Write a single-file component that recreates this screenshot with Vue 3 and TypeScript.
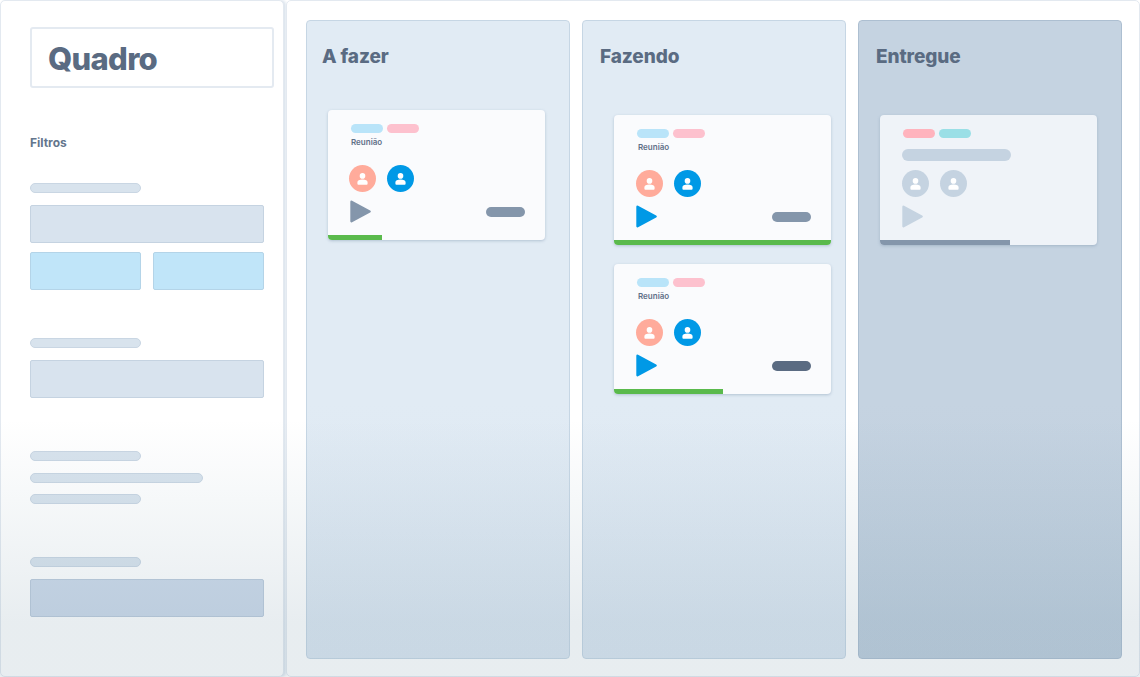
<script setup lang="ts">
type Card = {
  tags: string[];
  label?: string;
  avatars: string[];
  play: string;
  pill?: string;
  progress: number;
  progressColor: string;
};

type Column = {
  id: string;
  title: string;
  cards: Card[];
};

const green = '#5aba4c';

const columns: Column[] = [
  {
    id: 'todo',
    title: 'A fazer',
    cards: [
      {
        tags: ['#b9e4f9', '#fdc1ce'],
        label: 'Reunião',
        avatars: ['#ffab9b', '#0099e6'],
        play: '#8496ab',
        pill: '#8496ab',
        progress: 25,
        progressColor: green,
      },
    ],
  },
  {
    id: 'doing',
    title: 'Fazendo',
    cards: [
      {
        tags: ['#b9e4f9', '#fdc1ce'],
        label: 'Reunião',
        avatars: ['#ffab9b', '#0099e6'],
        play: '#0099e6',
        pill: '#8496ab',
        progress: 100,
        progressColor: green,
      },
      {
        tags: ['#b9e4f9', '#fdc1ce'],
        label: 'Reunião',
        avatars: ['#ffab9b', '#0099e6'],
        play: '#0099e6',
        pill: '#5a6b82',
        progress: 50,
        progressColor: green,
      },
    ],
  },
  {
    id: 'done',
    title: 'Entregue',
    cards: [
      {
        tags: ['#ffb3bd', '#9adfe6'],
        avatars: ['#c5d3e1', '#c5d3e1'],
        play: '#c5d3e1',
        progress: 60,
        progressColor: '#8496ab',
      },
    ],
  },
];
</script>

<template>
  <div class="page">
    <aside class="sidebar">
      <div class="title-box"><h1>Quadro</h1></div>
      <h2 class="filters">Filtros</h2>

      <section class="group group-first">
        <div class="bar" />
        <div class="field" />
        <div class="field-row">
          <div class="field field-blue" />
          <div class="field field-blue" />
        </div>
      </section>

      <section class="group group-second">
        <div class="bar" />
        <div class="field" />
      </section>

      <section class="group group-third">
        <div class="bar" />
        <div class="bar bar-long" />
        <div class="bar" />
      </section>

      <section class="group group-fourth">
        <div class="bar" />
        <div class="field field-dark" />
      </section>
    </aside>

    <main class="board">
      <section
        v-for="column in columns"
        :key="column.id"
        class="column"
        :class="`column-${column.id}`"
      >
        <h3>{{ column.title }}</h3>
        <div class="cards">
          <article v-for="(card, i) in column.cards" :key="i" class="card">
            <div class="card-body">
              <div class="tags">
                <span
                  v-for="tag in card.tags"
                  :key="tag"
                  class="tag"
                  :style="{ background: tag }"
                />
              </div>
              <p v-if="card.label" class="label">{{ card.label }}</p>
              <div v-else class="label-bar" />
              <div class="avatars">
                <span
                  v-for="(avatar, a) in card.avatars"
                  :key="a"
                  class="avatar"
                  :style="{ background: avatar }"
                >
                  <svg width="11" height="12" viewBox="0 0 11 12" fill="#fff">
                    <circle cx="5.5" cy="2.9" r="2.8" />
                    <path d="M.4 9.2C.4 7.4 2.4 6.6 5.5 6.6s5.1.8 5.1 2.6v1.6a1 1 0 0 1-1 1H1.4a1 1 0 0 1-1-1z" />
                  </svg>
                </span>
              </div>
              <div class="card-foot">
                <svg class="play" width="21" height="23" viewBox="0 0 21 23">
                  <path
                    d="M1.5 1.8 19.6 11.5 1.5 21.2Z"
                    :fill="card.play"
                    :stroke="card.play"
                    stroke-width="2.4"
                    stroke-linejoin="round"
                  />
                </svg>
                <span v-if="card.pill" class="pill" :style="{ background: card.pill }" />
              </div>
            </div>
            <div class="progress" :style="{ width: `${card.progress}%`, background: card.progressColor }" />
          </article>
        </div>
      </section>
    </main>

    <div class="fade" />
  </div>
</template>

<style scoped>
.page {
  position: relative;
  display: flex;
  width: 1140px;
  height: 677px;
  overflow: hidden;
  background: #fff;
  font-family: Inter, "Liberation Sans", sans-serif;
  color: #5a6b82;
}
.sidebar {
  box-sizing: border-box;
  width: 284px;
  height: 677px;
  flex: none;
  padding: 26px 20px 0 30px;
  background: #fff;
  border: 1px solid #e3e9f0;
  border-radius: 5px;
  box-shadow: 2px 0 3px rgba(150, 175, 200, 0.35);
}
.title-box {
  box-sizing: border-box;
  width: 244px;
  height: 61px;
  margin-left: -1px;
  padding-left: 16px;
  border: 2px solid #e4eaf1;
  border-radius: 3px;
  display: flex;
  align-items: center;
}
h1 {
  margin: 0;
  font-size: 31px;
  line-height: 1;
  font-weight: 800;
  letter-spacing: -0.7px;
  padding-top: 1px;
}
.filters {
  margin: 47px 0 0 -1px;
  font-size: 12px;
  line-height: 15px;
  font-weight: 700;
  color: #64768d;
}
.group {
  display: flex;
  flex-direction: column;
  margin-left: -1px;
}
.group-first {
  margin-top: 33px;
}
.group-second {
  margin-top: 48px;
}
.group-third {
  margin-top: 53px;
  gap: 11.5px;
}
.group-fourth {
  margin-top: 53px;
}
.bar {
  box-sizing: border-box;
  width: 111px;
  height: 10px;
  border-radius: 5px;
  background: #d8e3ed;
  border: 1px solid #c9d6e3;
}
.bar-long {
  width: 173px;
}
.field {
  box-sizing: border-box;
  flex: none;
  width: 234px;
  height: 38px;
  margin-top: 12px;
  border-radius: 2px;
  background: #d8e3ee;
  border: 1px solid #c5d3e1;
}
.field-row {
  display: flex;
  gap: 12px;
  margin-top: 9px;
}
.field-row .field {
  width: 111px;
  margin-top: 0;
}
.field-blue {
  background: #c0e5f9;
  border-color: #b4d4e8;
}
.field-dark {
  background: #cddaea;
  border-color: #bccbdc;
}
.board {
  flex: 1;
  display: flex;
  gap: 12px;
  margin-left: 2px;
  padding: 19px 17px 17px 19px;
  border: 1px solid #e3e9f0;
  border-radius: 5px;
  box-sizing: border-box;
  background: #fff;
}
.column {
  box-sizing: border-box;
  width: 264px;
  padding-top: 24px;
  border: 1px solid #c6d6e4;
  border-radius: 4px;
  background: linear-gradient(#e1ebf4 60%, #dbe6f1 100%);
}
.column-done {
  background: linear-gradient(#c5d3e1 60%, #bdcddc 100%);
  border-color: #adbfd1;
}
h3 {
  margin: 0;
  font-size: 19px;
  line-height: 24px;
  font-weight: 800;
  letter-spacing: -0.1px;
  padding-left: 17px;
}
.column-todo h3 {
  padding-left: 15px;
}
.cards {
  display: flex;
  flex-direction: column;
  gap: 19px;
  margin-top: 46px;
  padding-left: 31px;
}
.column-todo .cards {
  margin-top: 41px;
  padding-left: 21px;
}
.column-done .cards {
  padding-left: 21px;
}
.card {
  box-sizing: border-box;
  width: 217px;
  height: 130px;
  display: flex;
  flex-direction: column;
  overflow: hidden;
  border-radius: 4px;
  background: #fafbfd;
  box-shadow: 0 1px 3px rgba(120, 145, 170, 0.45);
}
.column-done .card {
  background: #eff3f8;
}
.card-body {
  flex: 1;
  padding: 14px 20px 0 22px;
}
.column-todo .card-body {
  padding-left: 21px;
}
.tags {
  display: flex;
  gap: 4px;
  padding-left: 1px;
}
.column-todo .tags {
  padding-left: 2px;
}
.tag {
  width: 32px;
  height: 9px;
  border-radius: 5px;
}
.label {
  margin: 4px 0 0 2px;
  font-size: 8px;
  line-height: 10px;
  font-weight: 600;
  color: #5f7088;
  height: 18px;
}
.label-bar {
  width: 109px;
  height: 12px;
  margin-top: 11px;
  margin-bottom: -1px;
  border-radius: 6px;
  background: #c5d3e1;
}
.avatars {
  display: flex;
  gap: 11px;
  margin-top: 10px;
  margin-left: -0.5px;
}
.column-todo .avatars {
  margin-left: 0;
}
.avatar {
  width: 27px;
  height: 27px;
  border-radius: 50%;
  display: flex;
  align-items: center;
  justify-content: center;
}
.card-foot {
  display: flex;
  align-items: center;
  justify-content: space-between;
  margin-top: 8px;
}
.column-todo .card-foot {
  padding-left: 1px;
}
.play {
  display: block;
}
.pill {
  width: 39px;
  height: 10px;
  border-radius: 5px;
}
.progress {
  height: 5px;
  flex: none;
}
.fade {
  position: absolute;
  inset: 0;
  pointer-events: none;
  background: linear-gradient(
    to bottom,
    rgba(100, 135, 155, 0) 62%,
    rgba(100, 135, 155, 0.15) 92%
  );
}
</style>

<style>
html,
body {
  margin: 0;
  background: #fff;
}
</style>
